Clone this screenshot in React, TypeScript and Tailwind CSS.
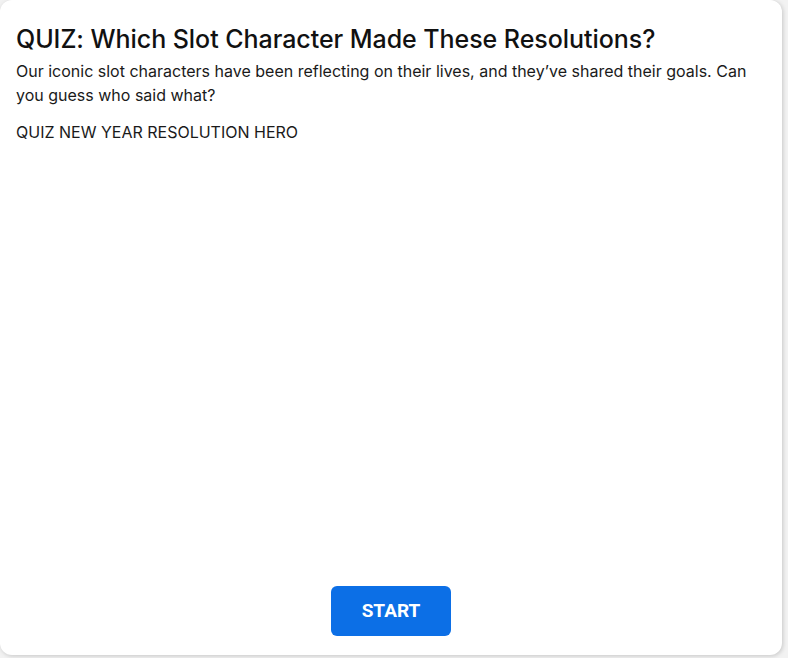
export default function App() {
  return (
    <div className="h-[658px] w-[788px] bg-[#f2f2f2]">
      <div
        className="flex h-[655px] w-[782px] flex-col rounded-xl bg-white px-4 pb-[19px] pt-[23px] text-[#111] shadow-[1px_1px_4px_rgba(0,0,0,0.18)]"
        style={{ fontFamily: "Inter, 'Noto Sans', sans-serif" }}
      >
        <h1 className="text-[25px] font-medium leading-8 tracking-[-0.05px]">
          QUIZ: Which Slot Character Made These Resolutions?
        </h1>
        <p className="mt-[4px] text-[16px] leading-6 text-[#1a1a1a]">
          Our iconic slot characters have been reflecting on their lives, and they’ve shared their goals. Can you guess who said what?
        </p>
        <div className="mt-[13px] text-[16px] leading-6 text-[#1a1a1a]">QUIZ NEW YEAR RESOLUTION HERO</div>
        <div className="flex-1" />
        <div className="flex justify-center">
          <button
            className="h-[50px] w-[120px] rounded-md bg-[#0c6fe6] text-[19px] font-bold text-white"
            style={{ fontFamily: "Roboto, 'Liberation Sans', sans-serif" }}
          >
            START
          </button>
        </div>
      </div>
    </div>
  );
}
